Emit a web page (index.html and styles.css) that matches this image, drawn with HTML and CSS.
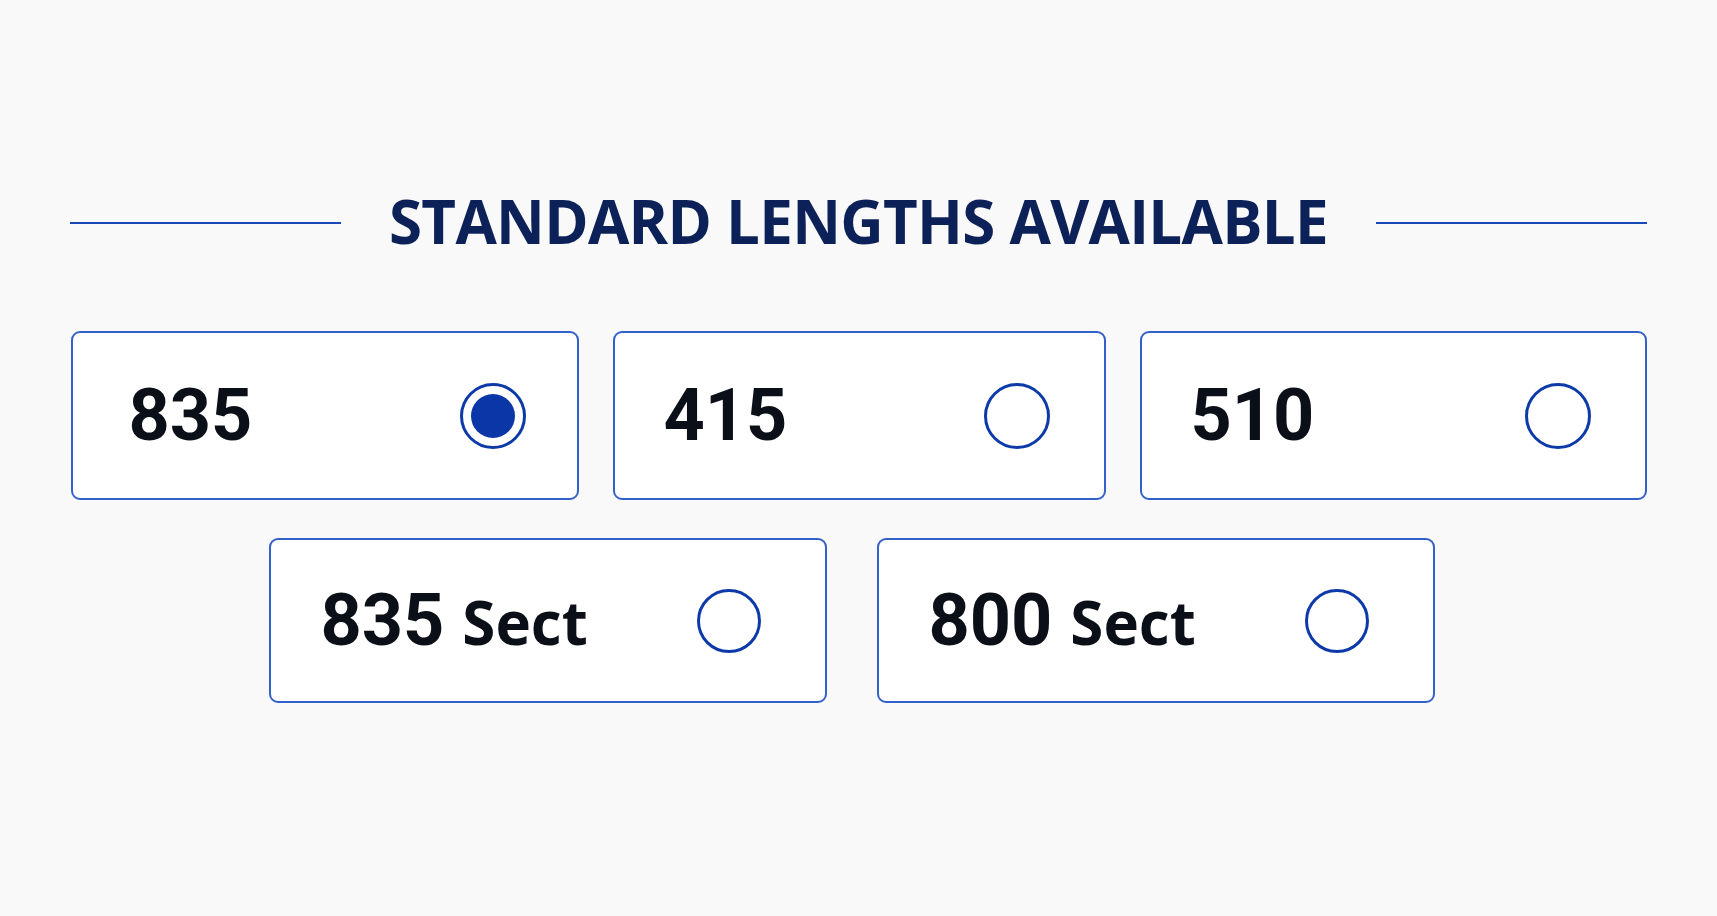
FILE: index.html
```html
<!DOCTYPE html>
<html lang="en">
<head>
  <meta charset="UTF-8" />
  <meta name="viewport" content="width=device-width, initial-scale=1.0"/>
  <title>Standard Lengths</title>
  <link rel="stylesheet" href="styles.css">
</head>
<body>
  <div class="container">
    <div class="heading">
      <span class="rule"></span>
      <h2>STANDARD LENGTHS AVAILABLE</h2>
      <span class="rule"></span>
    </div>

    <div class="row row-top">
      <label class="option">
        <span class="value">835</span>
        <span class="radio checked"></span>
      </label>
      <label class="option">
        <span class="value">415</span>
        <span class="radio"></span>
      </label>
      <label class="option">
        <span class="value">510</span>
        <span class="radio"></span>
      </label>
    </div>

    <div class="row row-bottom">
      <label class="option wide">
        <span class="value">835 <span class="unit">Sect</span></span>
        <span class="radio"></span>
      </label>
      <label class="option wide">
        <span class="value">800 <span class="unit">Sect</span></span>
        <span class="radio"></span>
      </label>
    </div>
  </div>
</body>
</html>
```

FILE: styles.css
```css
body {
  margin: 0;
  padding: 0;
  background-color: #f9f9fa;
  font-family: 'Roboto', 'Liberation Sans', sans-serif;
  color: #0b0f17;
}
.container {
  width: 1577px;
  margin: 0 auto;
  padding-top: 181px;
}
.heading {
  display: flex;
  align-items: center;
  gap: 48px;
  height: 80px;
  margin-bottom: 2px;
}
.rule {
  flex: 1;
  height: 2px;
  margin-top: 3px;
  background: #1a47b8;
}
.heading h2 {
  margin: 0;
  font-family: 'Open Sans', sans-serif;
  font-weight: 700;
  font-size: 60px;
  line-height: 80px;
  letter-spacing: -0.7px;
  color: #0b2158;
}
.row {
  display: flex;
  justify-content: center;
}
.row-top {
  display: grid;
  grid-template-columns: 508px 493px 507px;
  gap: 34px;
  margin-top: 70px;
}
.row-bottom {
  margin-top: 38px;
  gap: 50px;
  padding-right: 14px;
}
.option {
  box-sizing: border-box;
  display: flex;
  align-items: center;
  justify-content: space-between;
  background: #fff;
  border: 2px solid #3461c9;
  border-radius: 9px;
  cursor: pointer;
}
.row-top .option {
  height: 169px;
  padding: 0 54px 0 49px;
}
.row-top .option:first-child {
  padding: 0 51px 0 56px;
}
.option.wide {
  width: 558px;
  height: 165px;
  padding: 0 64px 0 50px;
}
.value {
  font-size: 72px;
  font-weight: 700;
  line-height: 1;
}
.unit {
  font-family: 'Open Sans', sans-serif;
  font-size: 60px;
}
.radio {
  box-sizing: border-box;
  width: 66px;
  height: 66px;
  border: 3px solid #0d3aa9;
  border-radius: 50%;
  display: flex;
  align-items: center;
  justify-content: center;
  background: #fff;
}
.option.wide .radio {
  width: 64px;
  height: 64px;
}
.radio.checked::after {
  content: "";
  width: 44px;
  height: 44px;
  border-radius: 50%;
  background: #0a36a8;
}
```
